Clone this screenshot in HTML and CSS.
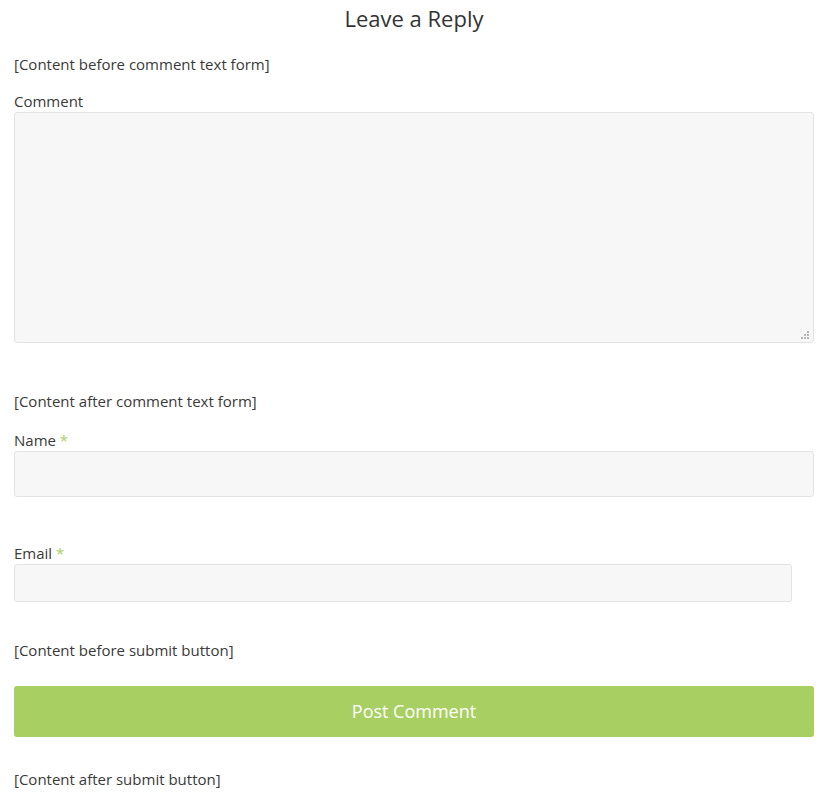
FILE: index.html
```html
<!DOCTYPE html>
<html lang="en">
<head>
<meta charset="utf-8">
<title>Leave a Reply</title>
<link rel="stylesheet" href="styles.css">
</head>
<body>
<div class="respond">
  <h2 class="reply-title">Leave a Reply</h2>
  <form class="comment-form">
    <p class="note note-before-text">[Content before comment text form]</p>
    <div class="field field-comment">
      <label class="label" for="comment">Comment</label>
      <div class="textarea-wrap">
        <textarea id="comment" class="textarea"></textarea>
        <svg class="grip" width="9" height="9" viewBox="0 0 9 9" aria-hidden="true">
          <rect x="6" y="0" width="2" height="2"/>
          <rect x="3" y="3" width="2" height="2"/>
          <rect x="6" y="3" width="2" height="2"/>
          <rect x="0" y="6" width="2" height="2"/>
          <rect x="3" y="6" width="2" height="2"/>
          <rect x="6" y="6" width="2" height="2"/>
        </svg>
      </div>
    </div>
    <p class="note note-after-text">[Content after comment text form]</p>
    <div class="field field-name">
      <label class="label" for="author">Name <span class="req">*</span></label>
      <input id="author" class="input input-name" type="text">
    </div>
    <div class="field field-email">
      <label class="label" for="email">Email <span class="req">*</span></label>
      <input id="email" class="input input-email" type="text">
    </div>
    <p class="note note-before-submit">[Content before submit button]</p>
    <button type="button" class="submit">Post Comment</button>
    <p class="note note-after-submit">[Content after submit button]</p>
  </form>
</div>
</body>
</html>
```

FILE: styles.css
```css
html, body {
  margin: 0;
  padding: 0;
  background: #ffffff;
}

body {
  font-family: "Open Sans", "Liberation Sans", sans-serif;
  font-size: 15px;
  line-height: 22px;
  color: #3a3a3a;
}

.respond {
  width: 800px;
  padding: 0 12px 0 14px;
}

.reply-title {
  margin: 0;
  padding-top: 3px;
  font-size: 22px;
  line-height: 30px;
  font-weight: 400;
  text-align: center;
  color: #333;
}

.comment-form {
  display: flex;
  flex-direction: column;
}

.note {
  margin: 0;
}

.note-before-text { margin-top: 20px; }
.field-comment { margin-top: 15px; }
.note-after-text { margin-top: 47px; }
.field-name { margin-top: 17px; }
.field-email { margin-top: 45px; }
.note-before-submit { margin-top: 37px; }
.submit { margin-top: 25px; }
.note-after-submit { margin-top: 31px; }

.field {
  display: flex;
  flex-direction: column;
}

.label {
  display: block;
}

.req {
  color: #a8cf62;
}

.textarea-wrap {
  position: relative;
  width: 800px;
  height: 231px;
}

.grip {
  position: absolute;
  right: 4px;
  bottom: 3px;
  fill: #b5b5b5;
  pointer-events: none;
}

.textarea,
.input {
  box-sizing: border-box;
  display: block;
  margin: 0;
  padding: 8px 10px;
  background: #f7f7f7;
  border: 1px solid #e3e3e3;
  border-radius: 3px;
  font: inherit;
  color: #333;
  outline: none;
}

.textarea {
  width: 800px;
  height: 231px;
  resize: none;
}

.input-name {
  width: 800px;
  height: 46px;
}

.input-email {
  width: 778px;
  height: 38px;
}

.submit {
  box-sizing: border-box;
  width: 800px;
  height: 51px;
  padding: 0 0 2px;
  border: none;
  border-radius: 3px;
  background: #a8cf62;
  color: #ffffff;
  font-family: "Open Sans", "Liberation Sans", sans-serif;
  font-size: 18px;
  cursor: pointer;
}
```
